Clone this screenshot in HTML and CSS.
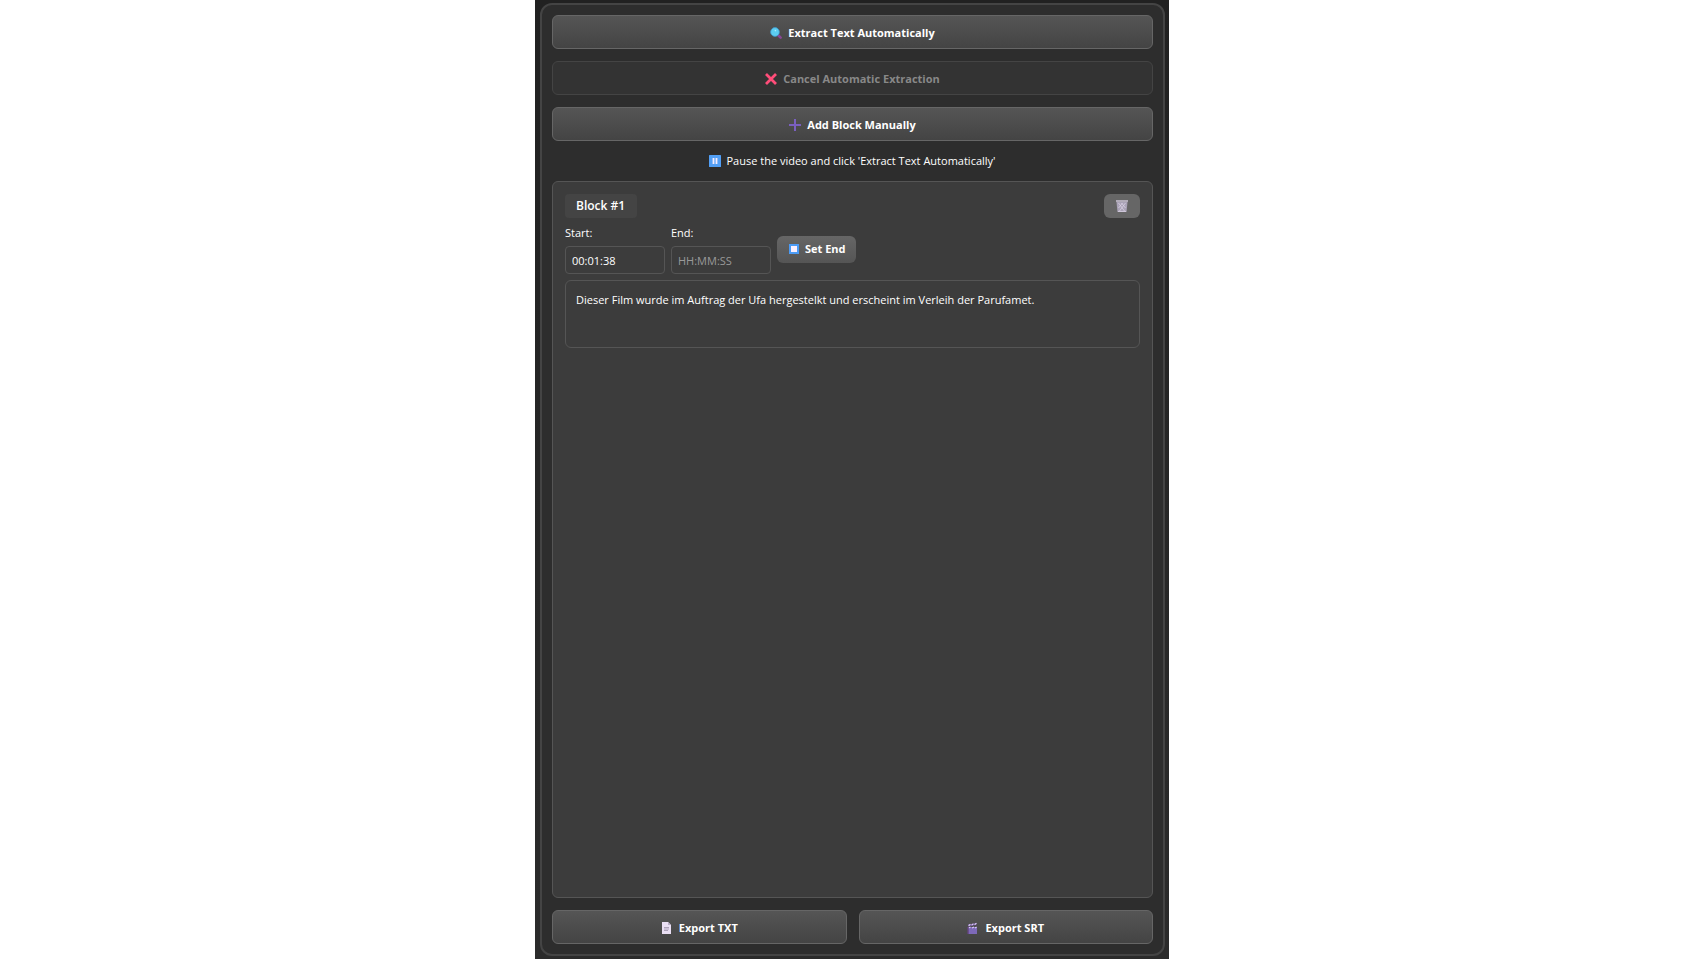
FILE: index.html
```
<!DOCTYPE html>
<html lang="en">

<head>
    <meta charset="UTF-8">
    <meta name="viewport" content="width=device-width, initial-scale=1.0">
    <title>Text Extraction</title>
    <link rel="stylesheet" href="styles.css">
</head>

<body>
    <main class="app">
        <div class="panel">
            <button type="button" class="btn">
                <svg class="icon" viewBox="0 0 12 12">
                    <path d="M8 8l2.6 2.6" stroke="#8a4795" stroke-width="2.6" stroke-linecap="round"/>
                    <circle cx="5" cy="5" r="4.4" fill="#5ccdf2" stroke="#3f94c6" stroke-width="0.8"/>
                    <circle cx="5.4" cy="3.6" r="0.8" fill="#a5ecff"/>
                </svg>
                Extract Text Automatically
            </button>
            <button type="button" class="btn" disabled>
                <svg class="icon" viewBox="0 0 12 12">
                    <path d="M1 1l10 10M11 1L1 11" stroke="#ff4d79" stroke-width="2.8"/>
                </svg>
                Cancel Automatic Extraction
            </button>
            <button type="button" class="btn">
                <svg class="icon" viewBox="0 0 12 12">
                    <path d="M6 0v12M0 6h12" stroke="#7a5fc0" stroke-width="2"/>
                </svg>
                Add Block Manually
            </button>

            <p class="status">
                <svg class="icon" viewBox="0 0 12 12">
                    <rect width="12" height="12" rx="0.5" fill="#529ff5"/>
                    <path d="M4.5 3v6M7.5 3v6" stroke="#f4edff" stroke-width="1.8"/>
                </svg>
                Pause the video and click 'Extract Text Automatically'
            </p>

            <section class="blocks">
                <article class="block">
                    <div class="block-header">
                        <h2>Block #1</h2>
                        <button type="button" class="btn-delete" aria-label="Delete block">
                            <svg class="icon" viewBox="0 0 12 12">
                                <path d="M0.5 2h11l-1 10h-9z" fill="#aaa3b7"/>
                                <path d="M2.5 3l6 8M5.5 3l4 5M9.5 3l-6 8M6.5 3L2.5 8M2 11.5h8" stroke="#ded6e8" stroke-width="0.7" fill="none"/>
                                <path d="M0 1h12" stroke="#d3cbdd" stroke-width="1.4"/>
                            </svg>
                        </button>
                    </div>
                    <div class="times">
                        <div class="field">
                            <label for="start">Start:</label>
                            <input type="text" id="start" value="00:01:38" placeholder="HH:MM:SS">
                        </div>
                        <div class="field">
                            <label for="end">End:</label>
                            <input type="text" id="end" placeholder="HH:MM:SS">
                        </div>
                        <button type="button" class="btn-small">
                            <svg class="icon-small" viewBox="0 0 10 10">
                                <rect width="10" height="10" fill="#4b9bf5"/>
                                <rect x="2" y="2" width="6" height="6" fill="#faf0ff"/>
                            </svg>
                            Set End
                        </button>
                    </div>
                    <textarea class="block-text" aria-label="Block text" spellcheck="false">Dieser Film wurde im Auftrag der Ufa hergestelkt und erscheint im Verleih der Parufamet.</textarea>
                </article>
            </section>

            <div class="exports">
                <button type="button" class="btn">
                    <svg class="icon" viewBox="0 0 12 12">
                        <path d="M1 0h6l3 3v9H1z" fill="#e9def3"/>
                        <path d="M7 0l3 3H7z" fill="#b9aec6"/>
                        <path d="M3 5.5h5M3 7h5M3 8.5h4" stroke="#ada2b9" stroke-width="1"/>
                    </svg>
                    Export TXT
                </button>
                <button type="button" class="btn">
                    <svg class="icon" viewBox="0 0 12 12">
                        <path d="M1 5h9v7H1z" fill="#7d69b8"/>
                        <path d="M1 2.5L9.5 1v2L1 4.5z" fill="#5d4581"/>
                        <path d="M1.5 3.6l2-1.2M4.5 3.2l2-1.4M7.5 2.6l2-1.3M1.5 6l2-1M5 6l2-1M8 6l1.6-1" stroke="#d9c9f5" stroke-width="1.3"/>
                        <path d="M1 5v7" stroke="#62437c" stroke-width="1.4"/>
                    </svg>
                    Export SRT
                </button>
            </div>
        </div>
    </main>
</body>

</html>
```
FILE: styles.css
```
* {
    box-sizing: border-box;
}

body {
    font-family: "Open Sans", "Noto Sans", sans-serif;
    font-size: 11px;
    line-height: 16px;
    color: #ffffff;
    background-color: #ffffff;
    margin: 0;
}

button,
input,
textarea {
    font: inherit;
    color: inherit;
}

.app {
    display: flex;
    max-width: 634px;
    min-height: 100vh;
    margin: 0 auto;
    padding: 3px 4px 3px 5px;
    background: linear-gradient(#212121, #2b2b2b);
}

.panel {
    flex: 1;
    display: flex;
    flex-direction: column;
    gap: 12px;
    padding: 10px;
    background-color: #2d2d2d;
    border: 2px solid #444444;
    border-radius: 12px;
}

.btn {
    display: flex;
    justify-content: center;
    align-items: center;
    gap: 6px;
    height: 34px;
    padding: 1px 16px 0;
    font-weight: 700;
    background: linear-gradient(#555555, #444444);
    border: 1px solid #666666;
    border-radius: 6px;
    cursor: pointer;
}

.btn:hover {
    background: linear-gradient(#666666, #555555);
}

.btn:disabled {
    color: #888888;
    background: #333333;
    border-color: #444444;
    cursor: default;
}

.icon {
    width: 12px;
    height: 12px;
}

.icon-small {
    width: 10px;
    height: 10px;
}

.status {
    display: flex;
    justify-content: center;
    align-items: center;
    gap: 5px;
    margin: 0;
}

.blocks {
    flex: 1;
    padding: 12px;
    background-color: #3c3c3c;
    border: 1px solid #555555;
    border-radius: 6px;
}

.block {
    display: flex;
    flex-direction: column;
    gap: 6px;
}

.block-header {
    display: flex;
    justify-content: space-between;
}

.block-header h2 {
    margin: 0;
    padding: 4px 12px 4px 11px;
    font-size: 12px;
    font-weight: 600;
    background-color: #444444;
    border-radius: 4px;
}

.btn-delete {
    display: flex;
    justify-content: center;
    align-items: center;
    width: 36px;
    padding: 0;
    background-color: #666666;
    border: none;
    border-radius: 6px;
    cursor: pointer;
}

.times {
    display: flex;
    align-items: center;
    gap: 6px;
}

.field {
    display: flex;
    flex-direction: column;
    gap: 4px;
    width: 100px;
}

.field label {
    line-height: 18px;
}

.field input {
    width: 100%;
    height: 28px;
    padding: 0 6px;
    background-color: #3c3c3c;
    border: 1px solid #555555;
    border-radius: 4px;
}

.field input::placeholder {
    color: #999999;
}

.btn-small {
    display: flex;
    align-items: center;
    gap: 6px;
    height: 27px;
    padding: 0 10px 0 12px;
    font-weight: 700;
    background: linear-gradient(#666666, #555555);
    border: none;
    border-radius: 6px;
    cursor: pointer;
}

.block-text {
    width: 100%;
    height: 68px;
    padding: 11px 10px;
    background-color: #3c3c3c;
    border: 1px solid #555555;
    border-radius: 6px;
    resize: none;
}

.exports {
    display: flex;
    gap: 12px;
}

.exports .btn {
    flex: 1;
}
```
